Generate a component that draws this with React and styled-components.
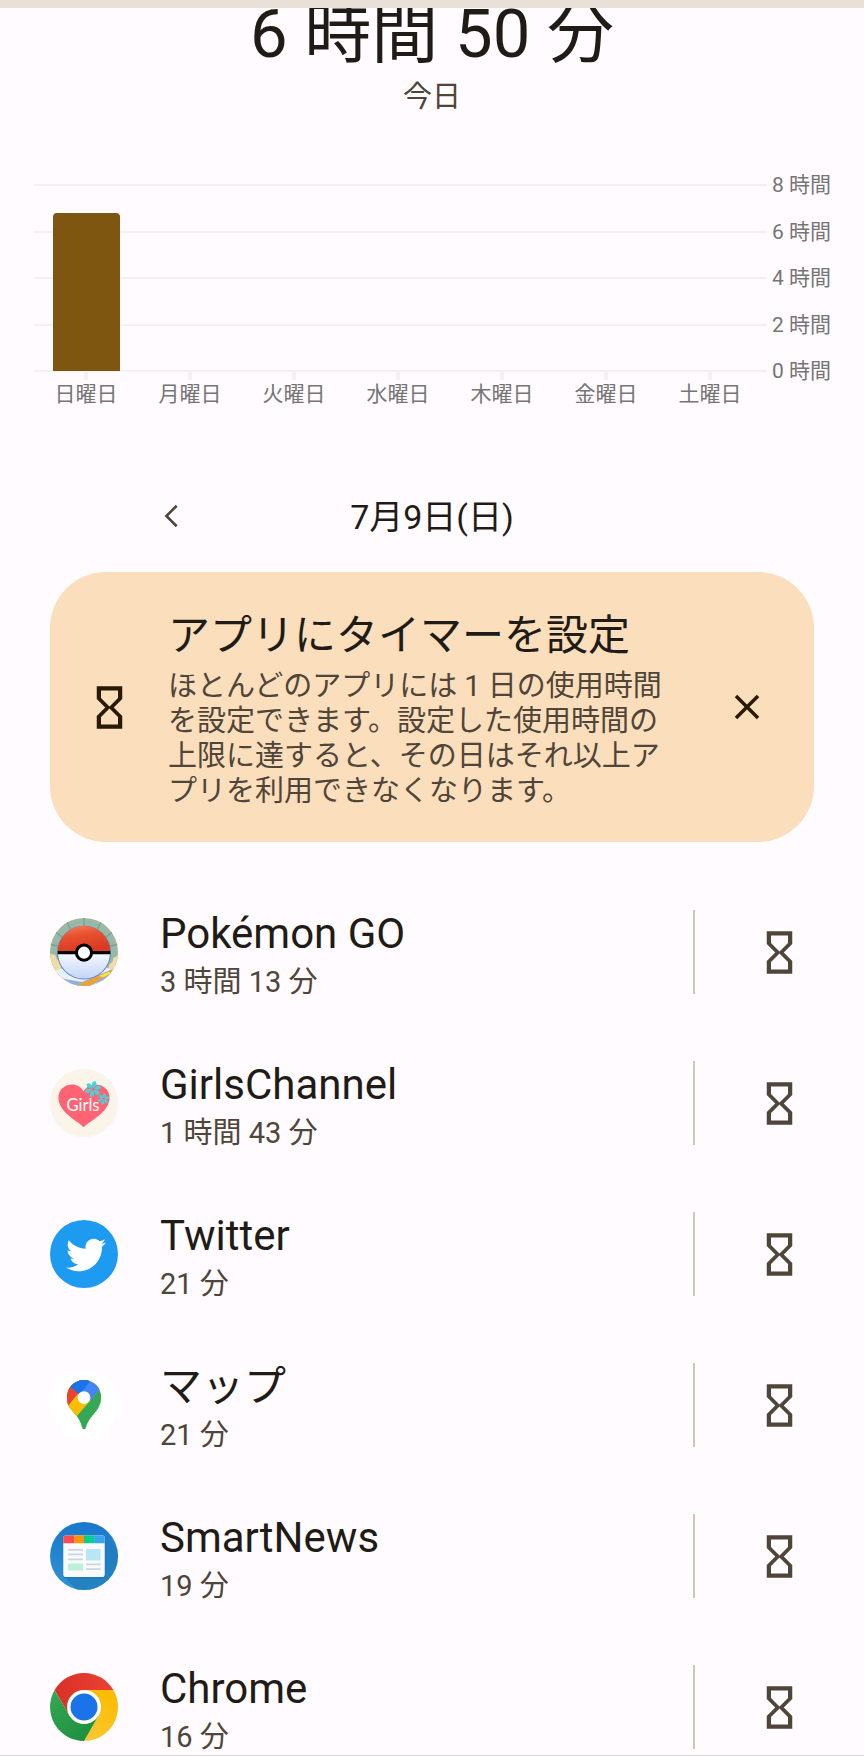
import React, { useState } from "react";
import styled, { createGlobalStyle } from "styled-components";
import { FaTwitter } from "react-icons/fa";

const days = [
  { label: "日曜日", hours: 6.83 },
  { label: "月曜日", hours: 0 },
  { label: "火曜日", hours: 0 },
  { label: "水曜日", hours: 0 },
  { label: "木曜日", hours: 0 },
  { label: "金曜日", hours: 0 },
  { label: "土曜日", hours: 0 }
];

const axis = [8, 6, 4, 2, 0];

const HourglassIcon = () => (
  <svg width="51" height="51" viewBox="0 0 24 24" fill="currentColor">
    <path d="M6 2v6h.01L6 8.01 10 12l-4 4 .01.01H6V22h12v-5.99h-.01L18 16l-4-4 4-3.99-.01-.01H18V2H6zm10 14.5V20H8v-3.5l4-4 4 4zm-4-5l-4-4V4h8v3.5l-4 4z" />
  </svg>
);

const CloseIcon = () => (
  <svg width="42" height="42" viewBox="0 0 24 24" fill="currentColor">
    <path d="M19 6.41L17.59 5 12 10.59 6.41 5 5 6.41 10.59 12 5 17.59 6.41 19 12 13.41 17.59 19 19 17.59 13.41 12z" />
  </svg>
);

const ChevronIcon = () => (
  <svg width="44" height="44" viewBox="0 0 24 24" fill="currentColor">
    <path d="M15.6 6.9L14.6 5.9 8.5 12l6.1 6.1 1-1L10.5 12z" />
  </svg>
);

const PokemonIcon = () => (
  <svg width="68" height="68" viewBox="61 52 202 202">
    <defs>
      <clipPath id="pokemon-clip">
        <circle cx="162" cy="153" r="101" />
      </clipPath>
      <linearGradient id="pokemon-red" x1="0" y1="0" x2="0.3" y2="1">
        <stop offset="0" stopColor="#f4825a" />
        <stop offset="0.45" stopColor="#e8502f" />
        <stop offset="1" stopColor="#d93a20" />
      </linearGradient>
      <linearGradient id="pokemon-white" x1="0" y1="0" x2="0" y2="1">
        <stop offset="0" stopColor="#f6f9ff" />
        <stop offset="1" stopColor="#c3d5f7" />
      </linearGradient>
    </defs>
    <g clipPath="url(#pokemon-clip)">
      <path d="M61 52h202v202H61z" fill="#93b9ab" />
      <circle cx="162" cy="156" r="98" fill="none" stroke="#a9b79a" strokeWidth="5" />
      <path
        d="M162 52v24M110 62l12 23M76 92l22 18M214 62l-12 23M248 92l-22 18M61 130l25 6M263 130l-25 6"
        stroke="#7ca08f"
        strokeWidth="4"
      />
      <path d="M61 158l16 4 4 12 12 10 2 26H61zM263 164l-14 6-2 12-10 8-4 22h30z" fill="#efdca6" />
      <path d="M72 210l24-8 132-4 20 10-20 50H90z" fill="#e9f1fb" />
      <path d="M96 232l60 10 90-38-10 26-60 24h-80z" fill="#8fb0dc" />
      <path d="M140 252l50-22 58-26-8 14-40 22-20 14z" fill="#f0a22e" />
      <path d="M206 224l30-12 6 4-22 12z" fill="#f8e24a" />
      <circle cx="162" cy="155" r="80" fill="#5e7fc4" />
      <path d="M84 153a78 78 0 0 1 156 0z" fill="url(#pokemon-red)" />
      <path d="M85 157a77 75 0 0 0 154 0z" fill="url(#pokemon-white)" />
      <path d="M84 150h156v10H84z" fill="#000" />
      <circle cx="162" cy="155" r="27" fill="#000" />
      <circle cx="162" cy="155" r="18" fill="#fff" />
    </g>
  </svg>
);

const Flower = ({ x, y, scale }) => (
  <g transform={`translate(${x} ${y}) scale(${scale})`} fill="#45d5de">
    {[12, 72, 132, 192, 252, 312].map(angle => (
      <path key={angle} transform={`rotate(${angle})`} d="M0 -3C-9 -12 -7 -24 0 -24S9 -12 0 -3z" />
    ))}
  </g>
);

const GirlsIcon = () => (
  <svg width="68" height="68" viewBox="61 56 202 202">
    <circle cx="162" cy="157" r="101" fill="#fbf4e8" />
    <path
      d="M161 229C143 210 86 186 86 141C86 99 144 88 161 123C178 88 238 99 238 141C238 186 179 210 161 229z"
      fill="#ff6374"
    />
    <GirlsText x="159" y="180" textAnchor="middle">
      Girls
    </GirlsText>
    <Flower x={189} y={116} scale={1} />
    <Flower x={220} y={145} scale={0.7} />
  </svg>
);

const TwitterIcon = () => (
  <TwitterDisc>
    <FaTwitter size={40} />
  </TwitterDisc>
);

const MapsIcon = () => (
  <svg width="68" height="68" viewBox="61 513 202 202">
    <defs>
      <clipPath id="maps-pin">
        <path d="M111 591A51 51 0 0 1 213 591C213 633 180 640 168 680Q166 687 162 687Q158 687 156 680C152 664 146 655 140 647C124 627 111 618 111 591z" />
      </clipPath>
    </defs>
    <circle cx="162" cy="614" r="101" fill="#fff" />
    <g clipPath="url(#maps-pin)">
      <path d="M100 530h130v170H100z" fill="#34a853" />
      <path d="M100 530h130v13L140 648 100 660z" fill="#fbbc04" />
      <path d="M100 530h60l2 62-17-13-29 36-16 10z" fill="#ea4335" />
      <path d="M122 560L100 530h82l-20 62z" fill="#1a73e8" />
      <path d="M182 540l50-10-24 39-26 31-34-19z" fill="#4285f4" />
      <path d="M122 560l25 22 36-42-30-10z" fill="#1a73e8" />
    </g>
    <circle cx="162" cy="592" r="19" fill="#fff" />
  </svg>
);

const SmartNewsIcon = () => (
  <svg width="68" height="68" viewBox="61 66 202 202">
    <defs>
      <clipPath id="news-clip">
        <circle cx="162" cy="167" r="101" />
      </clipPath>
      <clipPath id="news-paper">
        <rect x="100" y="105" width="124" height="125" rx="9" />
      </clipPath>
      <linearGradient id="news-blue" x1="0" y1="0" x2="0" y2="1">
        <stop offset="0" stopColor="#1878cc" />
        <stop offset="1" stopColor="#2f93d4" />
      </linearGradient>
    </defs>
    <g clipPath="url(#news-clip)">
      <path d="M61 66h202v202H61z" fill="url(#news-blue)" />
      <path d="M222 108l60 60v120H160l-58-60z" fill="#1f7cba" opacity="0.7" />
    </g>
    <rect x="99" y="108" width="126" height="125" rx="10" fill="#1566a0" opacity="0.6" />
    <g clipPath="url(#news-paper)">
      <path d="M100 105h124v125H100z" fill="#f8fafb" />
      <path d="M100 105h33v24h-33z" fill="#ff4b50" />
      <path d="M133 105h29v24h-29z" fill="#ff9500" />
      <path d="M162 105h30v24h-30z" fill="#00cf8e" />
      <path d="M192 105h32v24h-32z" fill="#3ba3ea" />
    </g>
    <path d="M114 149h45M114 162h45M114 177h45M168 192h43M168 206h43" stroke="#cbd6df" strokeWidth="5" />
    <rect x="168" y="146" width="43" height="34" rx="2" fill="#b9e5f5" />
    <rect x="114" y="189" width="45" height="21" rx="2" fill="#bcf1d9" />
  </svg>
);

const ChromeIcon = () => (
  <svg width="68" height="68" viewBox="0 0 68 68">
    <defs>
      <linearGradient id="chrome-red" x1="0" y1="0" x2="1" y2="0">
        <stop offset="0" stopColor="#d93025" />
        <stop offset="1" stopColor="#ea4335" />
      </linearGradient>
      <linearGradient id="chrome-yellow" x1="0" y1="1" x2="0.4" y2="0">
        <stop offset="0" stopColor="#fcc934" />
        <stop offset="1" stopColor="#fbbc04" />
      </linearGradient>
      <linearGradient id="chrome-green" x1="0.8" y1="1" x2="0" y2="0">
        <stop offset="0" stopColor="#1e8e3e" />
        <stop offset="1" stopColor="#34a853" />
      </linearGradient>
    </defs>
    <path d="M4.6 17A34 34 0 0 1 63.4 17H34L19.3 42.5z" fill="url(#chrome-red)" />
    <path d="M63.4 17A34 34 0 0 1 34 68L48.7 42.5 34 17z" fill="url(#chrome-yellow)" />
    <path d="M34 68A34 34 0 0 1 4.6 17L19.3 42.5H48.7z" fill="url(#chrome-green)" />
    <circle cx="34" cy="34" r="17" fill="#fff" />
    <circle cx="34" cy="34" r="13.5" fill="#1a73e8" />
  </svg>
);

const apps = [
  { name: "Pokémon GO", time: "3 時間 13 分", Icon: PokemonIcon },
  { name: "GirlsChannel", time: "1 時間 43 分", Icon: GirlsIcon },
  { name: "Twitter", time: "21 分", Icon: TwitterIcon },
  { name: "マップ", time: "21 分", Icon: MapsIcon },
  { name: "SmartNews", time: "19 分", Icon: SmartNewsIcon },
  { name: "Chrome", time: "16 分", Icon: ChromeIcon }
];

const UsageChart = () => (
  <Chart>
    <Axis>
      {axis.map(hour => (
        <AxisRow key={hour}>
          <GridLine />
          <AxisLabel>{hour} 時間</AxisLabel>
        </AxisRow>
      ))}
    </Axis>
    <Columns>
      {days.map(day => (
        <Column key={day.label}>
          <Track>
            <Bar style={{ height: `${Math.floor((day.hours / 8) * 186)}px` }} />
          </Track>
          <Tick />
          <DayLabel>{day.label}</DayLabel>
        </Column>
      ))}
    </Columns>
  </Chart>
);

const AppRow = ({ name, time, Icon }) => (
  <Row>
    <AppIcon>
      <Icon />
    </AppIcon>
    <AppText>
      <AppName>{name}</AppName>
      <AppTime>{time}</AppTime>
    </AppText>
    <Divider />
    <TimerButton type="button" aria-label={`${name} のタイマーを設定`}>
      <HourglassIcon />
    </TimerButton>
  </Row>
);

export default function App() {
  const [showTip, setShowTip] = useState(true);

  return (
    <>
      <GlobalStyle />
      <Page>
        <Header>
          <Total>6 時間 50 分</Total>
          <Today>今日</Today>
        </Header>
        <UsageChart />
        <DateNav>
          <IconButton type="button" aria-label="前の日">
            <ChevronIcon />
          </IconButton>
          <DateText>7月9日(日)</DateText>
        </DateNav>
        {showTip && (
          <Tip>
            <HourglassIcon />
            <TipText>
              <TipTitle>アプリにタイマーを設定</TipTitle>
              <TipBody>
                ほとんどのアプリには 1 日の使用時間を設定できます。設定した使用時間の上限に達すると、その日はそれ以上アプリを利用できなくなります。
              </TipBody>
            </TipText>
            <IconButton type="button" aria-label="閉じる" onClick={() => setShowTip(false)}>
              <CloseIcon />
            </IconButton>
          </Tip>
        )}
        <AppList>
          {apps.map(app => (
            <AppRow key={app.name} {...app} />
          ))}
        </AppList>
      </Page>
    </>
  );
}

const GlobalStyle = createGlobalStyle`
  * {
    box-sizing: border-box;
  }
  body {
    margin: 0;
    background: #fffbff;
    color: #1f1b16;
    font-family: Roboto, "Noto Sans CJK JP", sans-serif;
  }
  h1, h2, p, ul {
    margin: 0;
    padding: 0;
    font-weight: 400;
  }
  svg {
    display: block;
    flex-shrink: 0;
  }
`;

const Page = styled.main`
  border-top: 8px solid #e9e1d8;
  border-bottom: 1px solid #dcd8dc;
`;

/* the total is scrolled partly under the top bar */
const Header = styled.header`
  overflow: hidden;
  text-align: center;
`;

const Total = styled.h1`
  font-size: 67px;
  line-height: 52px;
`;

const Today = styled.p`
  margin-top: 20px;
  color: #4f4539;
  font-size: 29px;
  line-height: 34px;
`;

const Chart = styled.section`
  display: grid;
  margin-top: 59px;
  padding: 0 33px 0 34px;
  color: #757575;
  font-size: 21px;
`;

const Axis = styled.div`
  grid-area: 1 / 1;
  display: flex;
  flex-direction: column;
  justify-content: space-between;
  height: 210px;
`;

const AxisRow = styled.div`
  display: flex;
  align-items: center;
  gap: 5px;
  height: 24px;
`;

const GridLine = styled.div`
  flex: 1;
  height: 2px;
  background: #f1f0f2;
`;

const AxisLabel = styled.span`
  width: 59px;
  line-height: 24px;
  white-space: nowrap;
`;

/* shares the grid cell with the axis, stopping short of its labels */
const Columns = styled.div`
  grid-area: 1 / 1;
  display: grid;
  grid-template-columns: repeat(7, 1fr);
  margin-right: 69px;
`;

const Column = styled.div`
  display: flex;
  flex-direction: column;
  align-items: center;
`;

const Track = styled.div`
  display: flex;
  align-items: flex-end;
  height: 198px;
`;

const Bar = styled.div`
  width: 67px;
  border-radius: 4px 4px 0 0;
  background: #7f5610;
`;

const Tick = styled.div`
  width: 4px;
  height: 9px;
  background: #f1f0f2;
`;

const DayLabel = styled.span`
  line-height: 28px;
`;

const DateNav = styled.nav`
  display: flex;
  align-items: center;
  height: 48px;
  margin-top: 84px;
  padding: 0 147px;
`;

const IconButton = styled.button`
  display: flex;
  flex-shrink: 0;
  align-items: center;
  justify-content: center;
  width: 48px;
  height: 48px;
  padding: 0;
  border: none;
  background: none;
  color: inherit;
  cursor: pointer;

  ${DateNav} & {
    color: #4f4539;
  }
`;

const DateText = styled.p`
  flex: 1;
  padding: 2px 48px 0 0;
  font-size: 34px;
  line-height: 48px;
  text-align: center;
`;

const Tip = styled.section`
  display: flex;
  align-items: center;
  margin: 32px 50px 0;
  padding: 33px 43px 33px 34px;
  border-radius: 56px;
  background: #fbdebc;
  color: #281900;
`;

const TipText = styled.div`
  flex: 1;
  padding: 7px 48px 0 33px;
`;

const TipTitle = styled.h2`
  color: #1f1b16;
  font-size: 42px;
  line-height: 48px;
`;

const TipBody = styled.p`
  margin-top: 9px;
  color: #4f4539;
  font-size: 29px;
  line-height: 35px;
`;

const AppList = styled.ul`
  display: flex;
  flex-direction: column;
  gap: 62px;
  margin-top: 68px;
  padding: 0 51px 1px 50px;
  list-style: none;
`;

const Row = styled.li`
  display: flex;
  align-items: flex-start;
  height: 89px;
`;

const AppIcon = styled.div`
  margin-top: 8px;
`;

const TwitterDisc = styled.div`
  display: flex;
  align-items: center;
  justify-content: center;
  width: 68px;
  height: 68px;
  padding: 2px 0 0 3px;
  border-radius: 50%;
  background: #1d9bf0;
  color: #fff;
`;

const GirlsText = styled.text`
  fill: #fff;
  font-family: Lato, sans-serif;
  font-size: 49px;
`;

const AppText = styled.div`
  flex: 1;
  padding-left: 42px;
`;

const AppName = styled.h2`
  font-size: 42px;
  line-height: 48px;
`;

const AppTime = styled.p`
  margin-top: 7px;
  color: #4f4539;
  font-size: 29px;
  line-height: 34px;
`;

const Divider = styled.div`
  width: 2px;
  height: 84px;
  background: #cfc5b9;
`;

const TimerButton = styled.button`
  display: flex;
  align-items: center;
  justify-content: center;
  width: 68px;
  height: 84px;
  margin-left: 50px;
  padding: 0;
  border: none;
  background: none;
  color: #4f4539;
  cursor: pointer;
`;
